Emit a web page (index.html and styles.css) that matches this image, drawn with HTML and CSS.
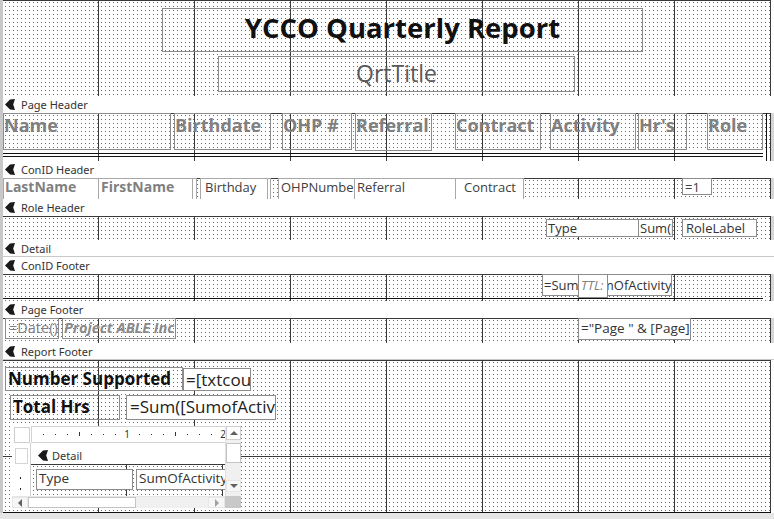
FILE: index.html
```html
<!DOCTYPE html>
<html>
<head>
<meta charset="utf-8">
<title>YCCO Quarterly Report - Design View</title>
<link rel="stylesheet" href="styles.css">
</head>
<body>
<div class="designer">
  <div class="rail"></div>
  <div class="surface">

    <section class="sec sec-rh">
      <div class="canvas grid">
        <div class="ctl lbl c-title">YCCO Quarterly Report</div>
        <div class="ctl lbl c-qrt">QrtTitle</div>
      </div>
      <div class="edge edge-white"></div>
    </section>

    <div class="bar"><svg class="ico" viewBox="0 0 10 11"><path d="M0 5.5 L5 0.5 L10 0 L8.2 5.5 L10 11 L5 10.5 Z"/></svg><span>Page Header</span></div>
    <section class="sec sec-ph">
      <div class="canvas col">
        <div class="ph-labels grid">
          <div class="ctl lbl hl h-name">Name</div>
          <div class="ctl lbl hl h-birth">Birthdate</div>
          <div class="ctl lbl hl h-ohp">OHP #</div>
          <div class="ctl lbl hl h-ref">Referral</div>
          <div class="ctl lbl hl h-con">Contract</div>
          <div class="ctl lbl hl h-act">Activity</div>
          <div class="ctl lbl hl h-hrs">Hr's</div>
          <div class="ctl lbl hl h-role">Role</div>
        </div>
        <div class="ph-band"><div class="dbl-rule"></div></div>
        <div class="ph-vline"></div>
      </div>
      <div class="edge"></div>
    </section>

    <div class="bar"><svg class="ico" viewBox="0 0 10 11"><path d="M0 5.5 L5 0.5 L10 0 L8.2 5.5 L10 11 L5 10.5 Z"/></svg><span>ConID Header</span></div>
    <section class="sec sec-ch">
      <div class="canvas grid">
        <div class="ctl tb ct ct-bold c-last">LastName</div>
        <div class="ctl tb ct ct-bold c-first">FirstName</div>
        <div class="ctl tb ct c-tiny1"></div>
        <div class="ctl tb ct c-bday">Birthday</div>
        <div class="ctl tb ct c-tiny2"></div>
        <div class="ctl tb ct c-ohp">OHPNumber</div>
        <div class="ctl tb ct c-ref">Referral</div>
        <div class="ctl tb ct c-con">Contract</div>
        <div class="ctl tb ct c-one">=1</div>
      </div>
      <div class="edge"></div>
    </section>

    <div class="bar"><svg class="ico" viewBox="0 0 10 11"><path d="M0 5.5 L5 0.5 L10 0 L8.2 5.5 L10 11 L5 10.5 Z"/></svg><span>Role Header</span></div>
    <section class="sec sec-role">
      <div class="canvas grid">
        <div class="ctl tb rt r-type">Type</div>
        <div class="ctl tb rt r-sum">Sum([SumOfActivity])</div>
        <div class="ctl tb rt r-role">RoleLabel</div>
      </div>
      <div class="edge"></div>
    </section>

    <div class="bar bar-light"><svg class="ico" viewBox="0 0 10 11"><path d="M0 5.5 L5 0.5 L10 0 L8.2 5.5 L10 11 L5 10.5 Z"/></svg><span>Detail</span></div>

    <div class="bar"><svg class="ico" viewBox="0 0 10 11"><path d="M0 5.5 L5 0.5 L10 0 L8.2 5.5 L10 11 L5 10.5 Z"/></svg><span>ConID Footer</span></div>
    <section class="sec sec-cf">
      <div class="canvas grid">
        <div class="ctl tb ft f-sum">=Sum([SumOfActivity])</div>
        <div class="ctl tb ft f-ttl">TTL:</div>
        <div class="f-rule"></div>
      </div>
      <div class="edge"></div>
    </section>

    <div class="bar"><svg class="ico" viewBox="0 0 10 11"><path d="M0 5.5 L5 0.5 L10 0 L8.2 5.5 L10 11 L5 10.5 Z"/></svg><span>Page Footer</span></div>
    <section class="sec sec-pf">
      <div class="canvas grid">
        <div class="ctl lbl pt p-date">=Date()</div>
        <div class="ctl lbl pt p-proj">Project ABLE Inc</div>
        <div class="ctl tb pt p-page">="Page " &amp; [Page]</div>
      </div>
      <div class="edge"></div>
    </section>

    <div class="bar bar-light"><svg class="ico" viewBox="0 0 10 11"><path d="M0 5.5 L5 0.5 L10 0 L8.2 5.5 L10 11 L5 10.5 Z"/></svg><span>Report Footer</span></div>
    <section class="sec sec-rf">
      <div class="canvas grid rf-canvas">
        <div class="ctl lbl rfb rf-num">Number Supported</div>
        <div class="ctl tb rfn rf-cnt">=[txtcount]</div>
        <div class="ctl lbl rfb rf-tot">Total Hrs</div>
        <div class="ctl tb rfn rf-sum">=Sum([SumofActivity])</div>

        <div class="sub">
          <div class="sub-corner"><span class="sub-corner-box"></span></div>
          <div class="sub-ruler">
            <svg width="194" height="16" viewBox="0 0 194 16">
              <g fill="#333">
                <rect x="12" y="8" width="1" height="1"/>
                <rect x="24" y="8" width="1" height="1"/>
                <rect x="36" y="8" width="1" height="1"/>
                <rect x="48" y="6" width="1" height="4"/>
                <rect x="60" y="8" width="1" height="1"/>
                <rect x="72" y="8" width="1" height="1"/>
                <rect x="84" y="8" width="1" height="1"/>
                <rect x="108" y="8" width="1" height="1"/>
                <rect x="120" y="8" width="1" height="1"/>
                <rect x="132" y="8" width="1" height="1"/>
                <rect x="144" y="6" width="1" height="4"/>
                <rect x="156" y="8" width="1" height="1"/>
                <rect x="168" y="8" width="1" height="1"/>
                <rect x="180" y="8" width="1" height="1"/>
              </g>
              <text x="96" y="12" class="rnum">1</text>
              <text x="192" y="12" class="rnum">2</text>
            </svg>
          </div>
          <div class="vs">
            <span class="sb-btn vs-up"><i class="tri tri-up"></i></span>
            <span class="vs-thumb"></span>
            <span class="vs-fill"></span>
            <span class="sb-btn vs-down"><i class="tri tri-down"></i></span>
          </div>
          <div class="sub-left">
            <span class="sub-left-box"></span>
            <span class="tick tick-a"></span>
            <span class="tick tick-b"></span>
          </div>
          <div class="sub-main">
            <div class="bar sub-bar"><svg class="ico" viewBox="0 0 10 11"><path d="M0 5.5 L5 0.5 L10 0 L8.2 5.5 L10 11 L5 10.5 Z"/></svg><span>Detail</span></div>
            <div class="sub-design grid">
              <div class="ctl tb st s-type">Type</div>
              <div class="ctl tb st s-sum">SumOfActivity</div>
            </div>
          </div>
          <div class="hs">
            <span class="sb-btn hs-left"><i class="tri tri-left"></i></span>
            <span class="hs-thumb"></span>
            <span class="hs-fill"></span>
            <span class="sb-btn hs-right"><i class="tri tri-right"></i></span>
          </div>
          <div class="sub-box"></div>
        </div>
      </div>
      <div class="edge edge-white"></div>
    </section>

  </div>
</div>
</body>
</html>
```

FILE: styles.css
```css
* { box-sizing: border-box; }
html, body { margin: 0; padding: 0; }
body {
  width: 774px;
  height: 519px;
  overflow: hidden;
  background: #e6e6e6;
  font-family: "Open Sans", "Noto Sans", sans-serif;
  color: #333;
}

.designer { display: flex; height: 513px; background: #fff; }
.rail { width: 3px; flex: none; background: #c8c8c8; }
.surface { width: 771px; display: flex; flex-direction: column; }

.sec { display: flex; flex: none; }
.canvas { position: relative; width: 768px; overflow: hidden; }
.col { display: flex; flex-direction: column; }
.edge { width: 3px; background: #d6d6d6; }
.edge-white { background: #fff; }

.grid {
  background-color: #fff;
  background-image:
    linear-gradient(to right, transparent 95px, #3a3a3a 95px),
    linear-gradient(to bottom, #3a3a3a 1px, transparent 1px),
    conic-gradient(at 1px 1px, transparent 75%, #6a6a6a 0);
  background-size: 96px 96px, 96px 96px, 4px 4px;
  background-position: 0 0, 0 0, 2px 2px;
}

/* section bars */
.bar {
  flex: none;
  height: 17px;
  display: flex;
  align-items: center;
  gap: 6px;
  padding-left: 2px;
  background: #fff;
  font-family: "Noto Sans", "Open Sans", sans-serif;
  font-size: 11px;
  color: #333;
}
.bar-light { border-bottom: 1px solid #c8c8c8; }
.ico { width: 10px; height: 11px; fill: #1a1a1a; flex: none; }

/* section heights */
.sec-rh { height: 96px; }
.sec-ph { height: 48px; }
.sec-ch { height: 21px; }
.sec-role { height: 24px; }
.sec-cf { height: 27px; }
.sec-pf { height: 25px; }
.sec-rf { height: 153px; }
.rf-canvas { border-bottom: 1px solid #111; }

/* controls (placed on the design canvas) */
.ctl {
  position: absolute;
  border: 1px solid #8c8c8c;
  overflow: hidden;
  white-space: nowrap;
}
.lbl { background: transparent; }
.tb { background: #fff; }

/* report header */
.c-title {
  left: 159px; top: 8px; width: 481px; height: 44px;
  font-weight: 700; font-size: 27.5px; line-height: 38px;
  text-align: center; color: #111;
}
.c-qrt {
  left: 215px; top: 56px; width: 357px; height: 36px;
  font-size: 23px; line-height: 33px;
  text-align: center; color: #595959;
}

/* page header */
.ph-labels { position: relative; height: 37px; flex: none; }
.ph-band {
  height: 11px;
  flex: none;
  background-image: linear-gradient(to right, transparent 95px, #3a3a3a 95px);
  background-size: 96px 100%;
}
.dbl-rule {
  margin-top: 3px;
  width: 760px;
  height: 4px;
  border-top: 1px solid #111;
  border-bottom: 1px solid #111;
}
.ph-vline { position: absolute; left: 763px; top: 0; width: 1px; height: 48px; background: #111; }

.hl {
  top: 0; height: 37px;
  padding-left: 0;
  font-weight: 700; font-size: 18px; line-height: 23px;
  color: #808080;
}
.h-name { left: 0; width: 168px; }
.h-birth { left: 171px; width: 97px; }
.h-ohp { left: 279px; width: 70px; }
.h-ref { left: 352px; width: 77px; height: 38px; }
.h-con { left: 452px; width: 86px; }
.h-act { left: 547px; width: 86px; }
.h-hrs { left: 635px; width: 49px; }
.h-role { left: 704px; width: 56px; }

/* ConID header */
.ct {
  top: 0; height: 21px;
  border-color: #a8a8a8;
  border-bottom: none;
  padding-left: 1px;
  font-size: 13px; line-height: 17px;
  color: #404040;
}
.ct-bold { font-weight: 700; font-size: 14px; line-height: 16px; color: #808080; }
.c-last { left: 0; width: 96px; }
.c-first { left: 95px; width: 95px; padding-left: 2px; }
.c-tiny1 { left: 189px; width: 5px; }
.c-bday { left: 197px; width: 68px; padding-left: 4px; }
.c-tiny2 { left: 264px; width: 4px; }
.c-ohp { left: 275px; width: 77px; padding-left: 2px; }
.c-ref { left: 351px; width: 102px; padding-left: 2px; }
.c-con { left: 452px; width: 69px; text-align: center; }
.c-one { left: 679px; width: 30px; height: 17px; border-bottom: 1px solid #8c8c8c; border-color: #8c8c8c; padding-left: 2px; }

/* Role header */
.rt {
  top: 3px; height: 18px;
  padding-left: 1px;
  font-size: 13px; line-height: 16px;
  color: #333;
}
.r-type { left: 543px; width: 93px; }
.r-sum { left: 635px; width: 35px; }
.r-role { left: 679px; width: 75px; padding-left: 3px; }

/* ConID footer */
.ft {
  top: 0;
  font-size: 13px; line-height: 20px;
  color: #333;
}
.f-sum { left: 539px; width: 130px; height: 22px; padding-left: 1px; }
.f-ttl { left: 575px; width: 30px; height: 24px; padding-left: 2px; font-style: italic; color: #808080; }
.f-rule { position: absolute; left: 0; top: 24px; width: 760px; height: 1px; background: #111; }

/* Page footer */
.pt {
  top: 0; height: 21px;
  font-size: 14.5px; line-height: 17px;
}
.p-date { left: 2px; width: 54px; padding-left: 3px; color: #808080; }
.p-proj { left: 59px; width: 114px; padding-left: 1px; font-weight: 700; font-style: italic; color: #8a8a8a; }
.p-page { left: 575px; width: 113px; height: 22px; padding-left: 2px; font-size: 13.5px; line-height: 18px; color: #333; }

/* Report footer */
.rfb { font-weight: 700; font-size: 17px; line-height: 22px; color: #111; padding-left: 2px; }
.rfn { font-size: 17px; line-height: 21px; color: #222; padding-left: 2px; }
.rf-num { left: 2px; top: 7px; width: 178px; height: 24px; }
.rf-cnt { left: 180px; top: 8px; width: 68px; height: 23px; }
.rf-tot { left: 7px; top: 35px; width: 110px; height: 25px; line-height: 21px; }
.rf-sum { left: 123px; top: 35px; width: 150px; height: 25px; padding-left: 3px; }

/* subreport control */
.sub {
  position: absolute;
  left: 9px; top: 66px;
  width: 229px; height: 82px;
  background: #fff;
  display: grid;
  grid-template-columns: 19px 194px 16px;
  grid-template-rows: 17px 53px 12px;
  grid-template-areas:
    "corner ruler vs"
    "left main vs"
    "hs hs box";
}
.sub-corner { grid-area: corner; padding: 1px 1px 0 2px; }
.sub-corner-box { display: block; width: 16px; height: 16px; border: 1px solid #cfcfcf; background: #fff; }
.sub-ruler { grid-area: ruler; border: 1px solid #d4d4d4; border-right: none; overflow: hidden; }
.sub-ruler svg { display: block; margin-top: -1px; margin-left: -1px; }
.rnum { font-family: "Noto Sans", sans-serif; font-size: 10px; fill: #333; text-anchor: middle; }

.vs {
  grid-area: vs;
  display: flex;
  flex-direction: column;
  background: #f0f0f0;
  border-left: 1px solid #e0e0e0;
}
.sb-btn {
  display: flex;
  align-items: center;
  justify-content: center;
  background: #fff;
  border: 1px solid #cfcfcf;
  flex: none;
}
.vs-up { height: 14px; }
.vs-thumb { height: 20px; margin-top: 3px; background: #fff; border: 1px solid #c4c4c4; flex: none; }
.vs-fill { flex: 1; }
.vs-down { height: 12px; margin-bottom: 4px; border-color: #e6e6e6; background: #f6f6f6; }

.tri { display: block; width: 0; height: 0; }
.tri-up { border-left: 4px solid transparent; border-right: 4px solid transparent; border-bottom: 4px solid #606060; }
.tri-down { border-left: 4px solid transparent; border-right: 4px solid transparent; border-top: 4px solid #606060; }
.tri-left { border-top: 4px solid transparent; border-bottom: 4px solid transparent; border-right: 4px solid #606060; }
.tri-right { border-top: 4px solid transparent; border-bottom: 4px solid transparent; border-left: 4px solid #a0a0a0; }

.sub-left { grid-area: left; position: relative; border-right: 1px solid #cfcfcf; }
.sub-left-box { position: absolute; left: 3px; top: 5px; width: 13px; height: 16px; border: 1px solid #d4d4d4; }
.tick { position: absolute; left: 8px; width: 1px; height: 2px; background: #222; }
.tick-a { top: 34px; }
.tick-b { top: 45px; }

.sub-main { grid-area: main; display: flex; flex-direction: column; overflow: hidden; }
.sub-bar { height: 21px; padding-left: 7px; padding-top: 3px; gap: 4px; }
.sub-design { position: relative; flex: 1; }
.st { top: 5px; height: 21px; font-size: 13.5px; line-height: 16px; padding-left: 2px; color: #333; }
.s-type { left: 5px; width: 97px; }
.s-sum { left: 105px; width: 100px; }

.hs {
  grid-area: hs;
  display: flex;
  background: #f0f0f0;
  border-top: 1px solid #e6e6e6;
}
.hs-left { width: 16px; border-color: #e6e6e6; background: #f6f6f6; }
.hs-thumb { width: 108px; background: #fff; border: 1px solid #c4c4c4; flex: none; }
.hs-fill { flex: 1; }
.hs-right { width: 17px; border-color: #e6e6e6; background: #f6f6f6; }
.sub-box { grid-area: box; background: #c8c8c8; }
```
